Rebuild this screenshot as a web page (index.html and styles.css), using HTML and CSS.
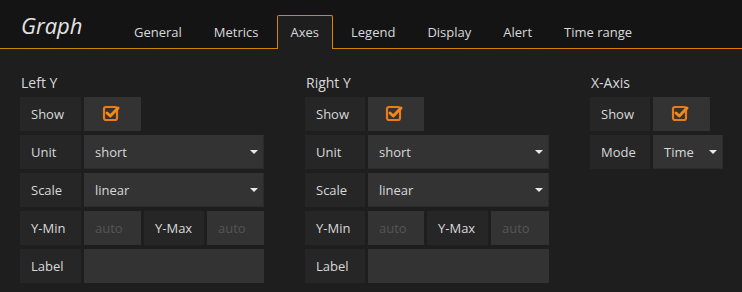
FILE: index.html
```html
<!DOCTYPE html>
<html>
<head>
<meta charset="utf-8">
<link rel="stylesheet" href="styles.css">
</head>
<body>
<div class="header">
  <div class="title">Graph</div>
  <ul class="tabs">
    <li class="tab">General</li>
    <li class="tab">Metrics</li>
    <li class="tab active">Axes</li>
    <li class="tab">Legend</li>
    <li class="tab">Display</li>
    <li class="tab">Alert</li>
    <li class="tab">Time range</li>
  </ul>
</div>
<div class="content">
  <div class="section col-wide">
    <h5 class="section-title">Left Y</h5>
    <div class="row">
      <div class="label w61">Show</div>
      <div class="input check w57"><svg width="20" height="20" viewBox="0 0 20 20"><rect x="2" y="4" width="13" height="13" rx="2" fill="none" stroke="#eb7b18" stroke-width="2.2"/><path d="M5 10 L8.3 13 L16 5" fill="none" stroke="#f08a1c" stroke-width="3" stroke-linecap="round" stroke-linejoin="round"/></svg></div>
    </div>
    <div class="row">
      <div class="label w61">Unit</div>
      <div class="input select grow">short<span class="caret"></span></div>
    </div>
    <div class="row">
      <div class="label w61">Scale</div>
      <div class="input select grow">linear<span class="caret"></span></div>
    </div>
    <div class="row">
      <div class="label w61">Y-Min</div>
      <div class="input placeholder w57">auto</div>
      <div class="label w60">Y-Max</div>
      <div class="input placeholder w57">auto</div>
    </div>
    <div class="row">
      <div class="label w61">Label</div>
      <div class="input grow"></div>
    </div>
  </div>
  <div class="section col-wide">
    <h5 class="section-title">Right Y</h5>
    <div class="row">
      <div class="label w60">Show</div>
      <div class="input check w56"><svg width="20" height="20" viewBox="0 0 20 20"><rect x="2" y="4" width="13" height="13" rx="2" fill="none" stroke="#eb7b18" stroke-width="2.2"/><path d="M5 10 L8.3 13 L16 5" fill="none" stroke="#f08a1c" stroke-width="3" stroke-linecap="round" stroke-linejoin="round"/></svg></div>
    </div>
    <div class="row">
      <div class="label w60">Unit</div>
      <div class="input select grow">short<span class="caret"></span></div>
    </div>
    <div class="row">
      <div class="label w60">Scale</div>
      <div class="input select grow">linear<span class="caret"></span></div>
    </div>
    <div class="row">
      <div class="label w60">Y-Min</div>
      <div class="input placeholder w56">auto</div>
      <div class="label w61">Y-Max</div>
      <div class="input placeholder grow">auto</div>
    </div>
    <div class="row">
      <div class="label w60">Label</div>
      <div class="input grow"></div>
    </div>
  </div>
  <div class="section">
    <h5 class="section-title">X-Axis</h5>
    <div class="row">
      <div class="label w60">Show</div>
      <div class="input check w57"><svg width="20" height="20" viewBox="0 0 20 20"><rect x="2" y="4" width="13" height="13" rx="2" fill="none" stroke="#eb7b18" stroke-width="2.2"/><path d="M5 10 L8.3 13 L16 5" fill="none" stroke="#f08a1c" stroke-width="3" stroke-linecap="round" stroke-linejoin="round"/></svg></div>
    </div>
    <div class="row">
      <div class="label w60">Mode</div>
      <div class="input select w70">Time<span class="caret"></span></div>
    </div>
  </div>
</div>
</body>
</html>
```

FILE: styles.css
```css
html, body {
  margin: 0;
  padding: 0;
}
body {
  background: #1f1e1f;
  font-family: "Open Sans", "DejaVu Sans", sans-serif;
  color: #d8d9da;
  width: 742px;
  height: 292px;
  overflow: hidden;
}
.header {
  background: #141414;
  height: 48px;
  display: flex;
  align-items: flex-end;
  border-bottom: 1px solid transparent;
  border-image: linear-gradient(to right, #c88700 0%, #e07800 100%) 1;
  box-sizing: content-box;
}
.title {
  font-style: italic;
  font-size: 22px;
  line-height: 30px;
  color: #e4e4e4;
  padding-left: 21px;
  align-self: flex-start;
  margin-top: 10px;
  width: 99px;
}
.tabs {
  list-style: none;
  margin: 0;
  padding: 0;
  display: flex;
  margin-bottom: -1px;
}
.tab {
  font-size: 13px;
  height: 32px;
  line-height: 32px;
  padding: 0 13px;
  margin-right: 4px;
  border: 1px solid transparent;
  border-bottom: none;
  color: #d8d9da;
}
.tab.active {
  background: #1f1e1f;
  border-color: #d88600;
  border-radius: 2px 2px 0 0;
  height: 33px;
}
.content {
  display: flex;
  padding: 24px 0 0 20px;
  gap: 41px;
}
.section {
  display: flex;
  flex-direction: column;
}
.col-wide {
  width: 244px;
}
.section-title {
  margin: 0 0 4px 1px;
  font-size: 14px;
  font-weight: normal;
  line-height: 20px;
  color: #d8d9da;
}
.row {
  display: flex;
  gap: 3px;
  height: 34px;
  margin-bottom: 4px;
}
.label {
  background: #262626;
  font-size: 13px;
  line-height: 34px;
  padding-left: 11px;
  box-sizing: border-box;
  color: #d8d9da;
}
.input {
  background: #333333;
  font-size: 13px;
  line-height: 34px;
  padding-left: 11px;
  box-sizing: border-box;
  color: #d8d9da;
  position: relative;
}
.check {
  padding: 0;
  display: flex;
  align-items: center;
  justify-content: center;
}
.check svg {
  margin-left: -2px;
  margin-top: -2px;
}
.placeholder {
  color: #555555;
}
.select {
  border-right: 1px solid #2b2b2b;
  border-bottom: 1px solid #2b2b2b;
}
.caret {
  position: absolute;
  right: 5px;
  top: 15px;
  width: 0;
  height: 0;
  border-left: 4px solid transparent;
  border-right: 4px solid transparent;
  border-top: 4px solid #e8e8e8;
}
.grow { flex: 1; }
.w56 { width: 56px; }
.w57 { width: 57px; }
.w60 { width: 60px; }
.w61 { width: 61px; }
.w70 { width: 70px; }
```
